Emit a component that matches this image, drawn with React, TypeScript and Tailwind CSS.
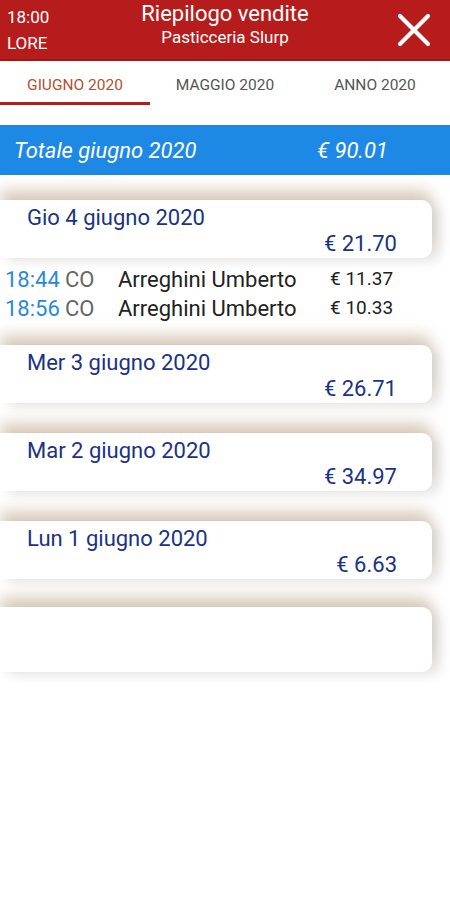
const days = [
  { label: "Gio 4 giugno 2020", total: "€ 21.70", rows: [
    { time: "18:44", code: "CO", name: "Arreghini Umberto", amount: "€ 11.37" },
    { time: "18:56", code: "CO", name: "Arreghini Umberto", amount: "€ 10.33" },
  ] },
  { label: "Mer 3 giugno 2020", total: "€ 26.71", rows: [] },
  { label: "Mar 2 giugno 2020", total: "€ 34.97", rows: [] },
  { label: "Lun 1 giugno 2020", total: "€ 6.63", rows: [] },
];

const cardClass =
  "mr-[18px] h-[58px] rounded-r-[10px] bg-white shadow-[0_-10px_15px_rgba(150,110,70,0.36),9px_4px_12px_rgba(0,0,0,0.09)]";

export default function App() {
  const tabs = ["GIUGNO 2020", "MAGGIO 2020", "ANNO 2020"];

  return (
    <div className="w-[450px] h-[900px] bg-white overflow-hidden font-['Roboto',sans-serif]">
      {/* Header */}
      <header className="h-[61px] bg-[#b71c1c] border-b-2 border-[#9e1616] flex items-start relative text-white">
        <div className="pl-[7px] pt-[4px] text-[17px] leading-[26px]">
          <div>18:00</div>
          <div>LORE</div>
        </div>
        <div className="absolute left-0 right-0 top-[1px] flex flex-col items-center">
          <span className="text-[22px] leading-[26px]">Riepilogo vendite</span>
          <span className="text-[17px] leading-[20px]">Pasticceria Slurp</span>
        </div>
        <svg className="absolute right-[19px] top-[13px] w-[34px] h-[34px]" viewBox="0 0 34 34" fill="none" stroke="white" strokeWidth="4.2" strokeLinecap="round">
          <path d="M3 3 L31 31 M31 3 L3 31" />
        </svg>
      </header>

      {/* Tabs */}
      <nav className="grid grid-cols-3 h-[44px]">
        {tabs.map((t, i) => (
          <div key={t} className="flex flex-col items-center justify-end">
            <span className={`text-[15.5px] leading-none pb-[9px] ${i === 0 ? "text-[#b5502f]" : "text-[#555]"}`}>{t}</span>
            <div className={`h-[3px] w-full ${i === 0 ? "bg-[#b71c1c]" : "bg-transparent"}`} />
          </div>
        ))}
      </nav>

      {/* Total */}
      <div className="mt-[20px] h-[50px] bg-[#1e88e5] flex items-center text-white italic text-[22px]">
        <span className="pl-[14px] w-[317px]">Totale giugno 2020</span>
        <span>€ 90.01</span>
      </div>

      {/* Days */}
      <div className="mt-[25px] flex flex-col">
        {days.map((d, i) => (
          <div key={d.label} className={i === 0 ? "" : i === 1 ? "mt-[22px]" : "mt-[30px]"}>
            <div className={cardClass + " pl-[27px] pr-[35px] pt-[5px] text-[#1a3384]"}>
              <div className="text-[22px] leading-[26px]">{d.label}</div>
              <div className="text-[22px] leading-[26px] text-right">{d.total}</div>
            </div>
            {d.rows.length > 0 && (
              <div className="pt-[7px]">
                {d.rows.map((r) => (
                  <div key={r.time} className="flex items-center h-[29px] pl-[5px] text-[22px]">
                    <span className="text-[#2a8ad8] w-[60px]">{r.time}</span>
                    <span className="text-[#666] w-[53px]">{r.code}</span>
                    <span className="text-[#222] w-[212px]">{r.name}</span>
                    <span className="text-[#222] text-[19px]">{r.amount}</span>
                  </div>
                ))}
              </div>
            )}
          </div>
        ))}
        <div className={cardClass + " mt-[28px] h-[65px]"} />
      </div>
    </div>
  );
}
